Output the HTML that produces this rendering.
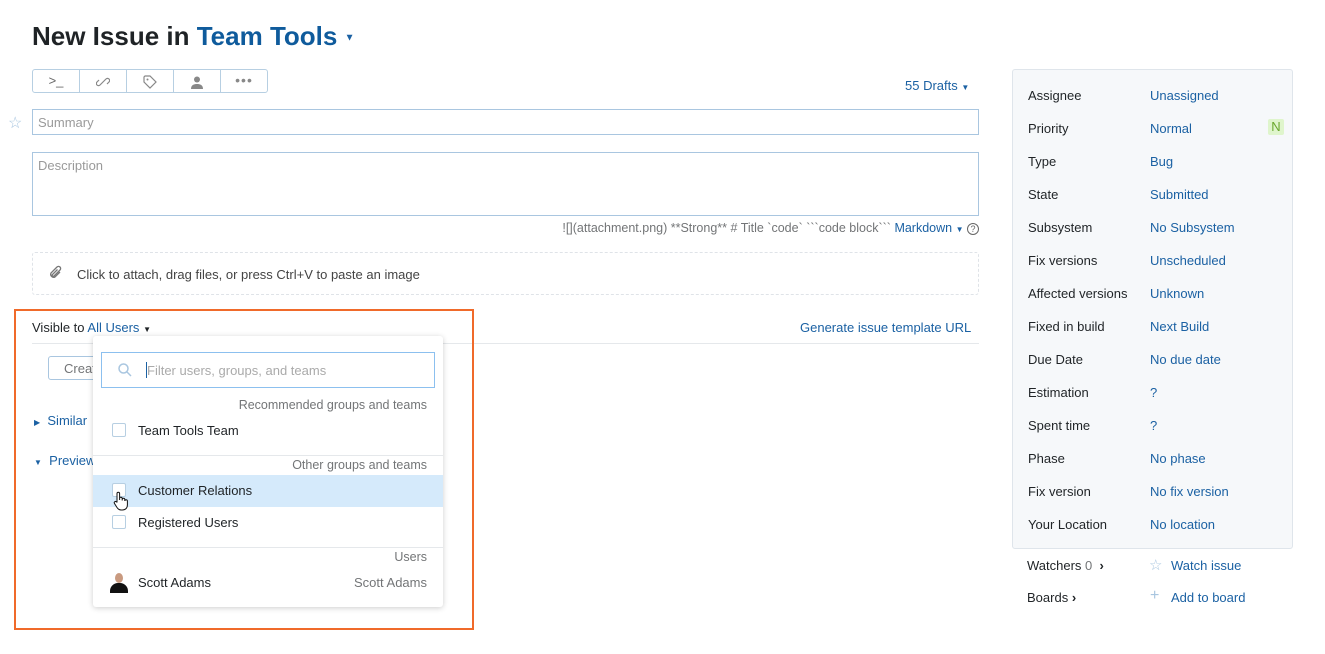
<!DOCTYPE html>
<html><head><style>
*{box-sizing:border-box;margin:0;padding:0}
body{width:1325px;height:654px;background:#fff;font-family:"Liberation Sans",sans-serif;font-size:13px;color:#1f2326;position:relative;overflow:hidden}
.a{position:absolute;white-space:nowrap}
.blue{color:#1b61a3}
.grey{color:#737577}
.lbl{position:absolute;left:1028px;color:#1f2326}
.val{position:absolute;left:1150px;color:#1b61a3}
</style></head><body>
<div class="a" style="left:32px;top:21px;font-size:26px;font-weight:bold;color:#1f2326">New Issue in <span style="color:#0f5b9c">Team Tools</span> <span style="font-size:10px;color:#1b61a3;vertical-align:middle">▼</span></div>

<div class="a" style="left:32px;top:69px;width:236px;height:24px;border:1px solid #b7cfe2;border-radius:3px;display:flex">
 <div style="flex:1;border-right:1px solid #b7cfe2;text-align:center;line-height:22px;color:#666">&gt;_</div>
 <div style="flex:1;border-right:1px solid #b7cfe2;text-align:center;line-height:22px;color:#888"><svg width="14" height="14" viewBox="0 0 14 14" style="vertical-align:middle"><path d="M6 8l-2 2a2 2 0 0 1-3-3l2-2M8 6l2-2a2 2 0 0 1 3 3l-2 2M5 9l4-4" stroke="#888" fill="none" stroke-width="1.2"/></svg></div>
 <div style="flex:1;border-right:1px solid #b7cfe2;text-align:center;line-height:22px"><svg width="14" height="14" viewBox="0 0 14 14" style="vertical-align:middle"><path d="M1 2v5l6 6 6-6-6-6H2z" stroke="#888" fill="none" stroke-width="1.2"/><circle cx="4.5" cy="4.5" r="1" fill="#888"/></svg></div>
 <div style="flex:1;border-right:1px solid #b7cfe2;text-align:center;line-height:22px"><svg width="14" height="14" viewBox="0 0 14 14" style="vertical-align:middle"><circle cx="7" cy="4.5" r="3" fill="#888"/><path d="M1 14c0-4 3-5 6-5s6 1 6 5z" fill="#888"/></svg></div>
 <div style="flex:1;text-align:center;line-height:20px;color:#888;font-size:14px;letter-spacing:1px">•••</div>
</div>
<div class="a blue" style="left:905px;top:78px">55 Drafts <span style="font-size:8px">▼</span></div>

<div class="a" style="left:8px;top:113px;color:#a9c6e0;font-size:16px">☆</div>
<div class="a" style="left:32px;top:109px;width:947px;height:26px;border:1px solid #a9c6e0;padding:5px 5px;color:#9a9a9a">Summary</div>
<div class="a" style="left:32px;top:152px;width:947px;height:64px;border:1px solid #a9c6e0;padding:5px 5px;color:#9a9a9a">Description</div>
<div class="a grey" style="right:346px;top:221px;font-size:12.5px">![](attachment.png) **Strong** # Title &#96;code&#96; &#96;&#96;&#96;code block&#96;&#96;&#96; <span class="blue">Markdown</span> <span style="font-size:8px;color:#1b61a3">▼</span> <span style="display:inline-block;width:12px;height:12px;border:1px solid #666;border-radius:50%;font-size:9px;text-align:center;line-height:10px;color:#666">?</span></div>
<div class="a" style="left:32px;top:252px;width:947px;height:43px;border:1px dashed #dfe3e8;border-radius:3px;color:#444;padding:14px 0 0 44px">Click to attach, drag files, or press Ctrl+V to paste an image</div>
<svg class="a" style="left:48px;top:265px" width="16" height="16" viewBox="0 0 16 16"><path d="M12 7l-5 5a3 3 0 0 1-4-4l6-6a2 2 0 0 1 3 3l-6 6a1 1 0 0 1-1.5-1.5l5-5" stroke="#777" fill="none" stroke-width="1.3"/></svg>

<div class="a" style="left:32px;top:320px">Visible to <span class="blue">All Users</span> <span style="font-size:8px">▼</span></div>
<div class="a blue" style="left:800px;top:320px">Generate issue template URL</div>
<div class="a" style="left:32px;top:343px;width:947px;height:1px;background:#e5e8eb"></div>
<div class="a grey" style="left:48px;top:356px;width:60px;height:24px;border:1px solid #a9c6e0;border-radius:3px;padding:4px 0 0 15px">Create</div>
<div class="a blue" style="left:34px;top:413px"><span style="font-size:8px">▶</span>&nbsp; Similar</div>
<div class="a blue" style="left:34px;top:453px"><span style="font-size:8px">▼</span>&nbsp; Preview</div>

<div class="a" style="left:14px;top:309px;width:460px;height:321px;border:2px solid #f06a2a"></div>

<div class="a" style="left:93px;top:336px;width:350px;height:271px;background:#fff;border-radius:3px;box-shadow:0 1px 6px rgba(0,0,0,.2)">
 <div class="a" style="left:8px;top:16px;width:334px;height:36px;border:1px solid #8cc0ef;padding:10px 0 0 45px;color:#aaa">Filter users, groups, and teams</div>
 <div class="a" style="left:53px;top:26px;width:1px;height:16px;background:#1b61a3"></div>
 <svg class="a" style="left:25px;top:27px" width="14" height="14" viewBox="0 0 14 14"><circle cx="5.5" cy="5.5" r="4.5" stroke="#a9c6e0" fill="none" stroke-width="1.5"/><path d="M9 9l4 4" stroke="#a9c6e0" stroke-width="1.5"/></svg>
 <div class="a grey" style="right:16px;top:62px;font-size:12.5px">Recommended groups and teams</div>
 <div class="a" style="left:19px;top:87px;width:14px;height:14px;border:1px solid #b7cfe2;border-radius:2px"></div>
 <div class="a" style="left:45px;top:87px">Team Tools Team</div>
 <div class="a" style="left:0;top:119px;width:350px;height:1px;background:#e5e8eb"></div>
 <div class="a grey" style="right:16px;top:122px;font-size:12.5px">Other groups and teams</div>
 <div class="a" style="left:0;top:139px;width:350px;height:32px;background:#d5eafb"></div>
 <div class="a" style="left:19px;top:147px;width:14px;height:14px;border:1px solid #b7cfe2;border-radius:2px;background:#fff"></div>
 <div class="a" style="left:45px;top:147px">Customer Relations</div>
 <svg class="a" style="left:20px;top:155px" width="16" height="20" viewBox="0 0 16 20"><path d="M4 11V2.5a1.3 1.3 0 0 1 2.6 0V9V7.5a1.3 1.3 0 0 1 2.6 0V9.5V8.5a1.3 1.3 0 0 1 2.6 0V10a1.3 1.3 0 0 1 2.6 0V14c0 3-2 5-5 5H8c-2 0-3-1-4-2.5L1.5 12.5a1.2 1.2 0 0 1 2-1.5z" fill="#fff" stroke="#111" stroke-width="1"/></svg>
 <div class="a" style="left:19px;top:179px;width:14px;height:14px;border:1px solid #b7cfe2;border-radius:2px"></div>
 <div class="a" style="left:45px;top:179px">Registered Users</div>
 <div class="a" style="left:0;top:211px;width:350px;height:1px;background:#e5e8eb"></div>
 <div class="a grey" style="right:16px;top:214px;font-size:12.5px">Users</div>
 <div class="a" style="left:16px;top:237px;width:20px;height:20px;overflow:hidden"><div style="position:absolute;left:6px;top:0;width:8px;height:10px;border-radius:50%;background:#c99a80"></div><div style="position:absolute;left:1px;top:10px;width:18px;height:14px;border-radius:8px 8px 0 0;background:#111"></div></div>
 <div class="a" style="left:45px;top:239px">Scott Adams</div>
 <div class="a grey" style="right:16px;top:239px">Scott Adams</div>
</div>

<div class="a" style="left:1012px;top:69px;width:281px;height:480px;background:#f6f8fa;border:1px solid #dfe5eb;border-radius:3px"></div>
<div class="lbl" style="top:88px">Assignee</div><div class="val" style="top:88px">Unassigned</div>
<div class="lbl" style="top:121px">Priority</div><div class="val" style="top:121px">Normal</div>
<div class="a" style="left:1268px;top:119px;width:16px;height:16px;background:#dff5cc;color:#6aa82e;text-align:center;line-height:16px;border-radius:2px">N</div>
<div class="lbl" style="top:154px">Type</div><div class="val" style="top:154px">Bug</div>
<div class="lbl" style="top:187px">State</div><div class="val" style="top:187px">Submitted</div>
<div class="lbl" style="top:220px">Subsystem</div><div class="val" style="top:220px">No Subsystem</div>
<div class="lbl" style="top:253px">Fix versions</div><div class="val" style="top:253px">Unscheduled</div>
<div class="lbl" style="top:286px">Affected versions</div><div class="val" style="top:286px">Unknown</div>
<div class="lbl" style="top:319px">Fixed in build</div><div class="val" style="top:319px">Next Build</div>
<div class="lbl" style="top:352px">Due Date</div><div class="val" style="top:352px">No due date</div>
<div class="lbl" style="top:385px">Estimation</div><div class="val" style="top:385px">?</div>
<div class="lbl" style="top:418px">Spent time</div><div class="val" style="top:418px">?</div>
<div class="lbl" style="top:451px">Phase</div><div class="val" style="top:451px">No phase</div>
<div class="lbl" style="top:484px">Fix version</div><div class="val" style="top:484px">No fix version</div>
<div class="lbl" style="top:517px">Your Location</div><div class="val" style="top:517px">No location</div>

<div class="a" style="left:1027px;top:558px">Watchers <span class="grey">0</span> &nbsp;<b>›</b></div>
<div class="a" style="left:1149px;top:556px;color:#a9c6e0;font-size:15px">☆</div>
<div class="a blue" style="left:1171px;top:558px">Watch issue</div>
<div class="a" style="left:1027px;top:590px">Boards <b>›</b></div>
<div class="a" style="left:1150px;top:587px;color:#a9c6e0;font-size:16px">+</div>
<div class="a blue" style="left:1171px;top:590px">Add to board</div>
</body></html>
